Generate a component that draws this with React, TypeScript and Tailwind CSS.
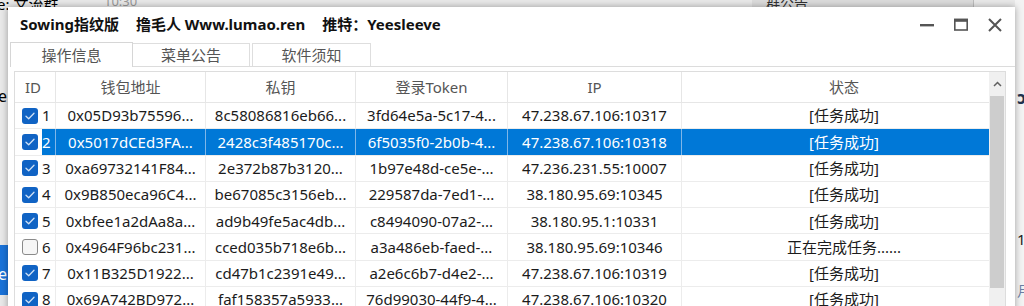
import React from 'react';

type Row = {
    id: number;
    checked: boolean;
    wallet: string;
    key: string;
    token: string;
    ip: string;
    status: string;
};

const rows: Row[] = [
    { id: 1, checked: true, wallet: '0x05D93b75596...', key: '8c58086816eb66...', token: '3fd64e5a-5c17-4...', ip: '47.238.67.106:10317', status: '[任务成功]' },
    { id: 2, checked: true, wallet: '0x5017dCEd3FA...', key: '2428c3f485170c...', token: '6f5035f0-2b0b-4...', ip: '47.238.67.106:10318', status: '[任务成功]' },
    { id: 3, checked: true, wallet: '0xa69732141F84...', key: '2e372b87b3120...', token: '1b97e48d-ce5e-...', ip: '47.236.231.55:10007', status: '[任务成功]' },
    { id: 4, checked: true, wallet: '0x9B850eca96C4...', key: 'be67085c3156eb...', token: '229587da-7ed1-...', ip: '38.180.95.69:10345', status: '[任务成功]' },
    { id: 5, checked: true, wallet: '0xbfee1a2dAa8a...', key: 'ad9b49fe5ac4db...', token: 'c8494090-07a2-...', ip: '38.180.95.1:10331', status: '[任务成功]' },
    { id: 6, checked: false, wallet: '0x4964F96bc231...', key: 'cced035b718e6b...', token: 'a3a486eb-faed-...', ip: '38.180.95.69:10346', status: '正在完成任务......' },
    { id: 7, checked: true, wallet: '0x11B325D1922...', key: 'cd47b1c2391e49...', token: 'a2e6c6b7-d4e2-...', ip: '47.238.67.106:10319', status: '[任务成功]' },
    { id: 8, checked: true, wallet: '0x69A742BD972...', key: 'faf158357a5933...', token: '76d99030-44f9-4...', ip: '47.238.67.106:10320', status: '[任务成功]' },
];

const SELECTED = 2;

const Checkbox: React.FC<{ checked: boolean }> = ({ checked }) =>
    checked ? (
        <span className="flex items-center justify-center w-[16px] h-[16px] rounded-[3px] bg-[#1063c4]">
            <svg width="10" height="8" viewBox="0 0 10 8" fill="none">
                <path d="M1 4.2 L3.7 6.8 L9 1.3" stroke="#cfe0f5" strokeWidth="1.3" strokeLinecap="round" strokeLinejoin="round" />
            </svg>
        </span>
    ) : (
        <span className="block w-[16px] h-[16px] rounded-[3px] bg-[#f6f6f6] border border-[#8a8a8a]" />
    );

const App: React.FC = () => {
    return (
        <div
            className="relative w-[1024px] h-[306px] overflow-hidden bg-[#e9e9e9] text-[#1b1b1b]"
            style={{ fontFamily: '"Noto Sans", "Noto Sans CJK SC", sans-serif' }}
        >
            {/* desktop behind the window */}
            <div className="absolute left-[-3px] top-[-7px] text-[15px] text-black">e: 文流群</div>
            <div className="absolute left-[104px] top-[-8px] text-[13px] text-[#999]">10:30</div>
            <div className="absolute left-[752px] top-0 w-[222px] h-[7px] bg-[#dcdcdc] border-r border-[#bdbdbd]" />
            <div className="absolute left-[766px] top-[-8px] text-[14px] text-[#333]">群公告</div>
            <div className="absolute left-[-2px] top-[84px] text-[16px] text-black">e</div>
            <div className="absolute left-0 top-[245px] w-[8px] h-[50px] bg-[#1a73d9]" />
            <div className="absolute left-[-2px] top-[262px] text-[16px] text-white">e</div>
            <div className="absolute left-[1015px] top-0 w-[9px] h-[306px] bg-[#f3f3f3]" />
            <div className="absolute left-[1017px] top-[84px] text-[18px] font-bold text-[#1f3450]">ɔ</div>
            <div className="absolute left-[1017px] top-[228px] text-[15px] text-[#222]">1</div>
            <div className="absolute left-[1017px] top-[280px] text-[14px] text-[#6b7fa5]">月</div>

            {/* application window */}
            <div className="absolute left-[8px] top-[7px] w-[1007px] h-[320px] bg-white shadow-[0_0_7px_rgba(0,0,0,0.35)]">
                <div className="flex items-center justify-between h-[35px] pl-[12px] pr-[13px]">
                    <div className="flex items-center gap-[17px] text-[15px] font-bold text-[#111]">
                        <span>Sowing指纹版</span>
                        <span>撸毛人 Www.lumao.ren</span>
                        <span>推特：Yeesleeve</span>
                    </div>
                    <div className="flex items-center gap-[20px] text-[#444]">
                        <svg width="14" height="14" viewBox="0 0 14 14">
                            <rect x="0" y="6" width="14" height="2.4" fill="#555" />
                        </svg>
                        <svg width="14" height="14" viewBox="0 0 14 14" fill="none">
                            <rect x="0.8" y="1.5" width="12.4" height="10.5" stroke="#555" strokeWidth="1.6" />
                            <rect x="0" y="0.8" width="14" height="3" fill="#555" />
                        </svg>
                        <svg width="14" height="14" viewBox="0 0 14 14" fill="none">
                            <path d="M1 1 L13 13 M13 1 L1 13" stroke="#555" strokeWidth="2" />
                        </svg>
                    </div>
                </div>

                {/* tabs */}
                <div className="flex items-end h-[25px] ml-[2px] border-b border-[#dcdcdc] text-[15px] text-[#555]">
                    <div className="flex items-center justify-center w-[123px] h-[25px] bg-white border border-b-0 border-[#d6d6d6] relative top-[1px]">
                        操作信息
                    </div>
                    <div className="flex items-center justify-center w-[117px] h-[23px] border border-b-0 border-l-0 border-[#dedede]">
                        菜单公告
                    </div>
                    <div className="flex items-center justify-center w-[119px] h-[23px] ml-[2px] border border-b-0 border-[#dedede]">
                        软件须知
                    </div>
                </div>

                {/* grid */}
                <div className="flex ml-[6px] mt-[4px] w-[992px] border border-[#dddddd] text-[15px]">
                    <div className="w-[974px]">
                        <div className="flex h-[31px] border-b border-[#e6e6e6] text-[#555]">
                            <div className="w-[41px] flex items-center pl-[10px] border-r border-[#e6e6e6]">ID</div>
                            <div className="w-[150px] flex items-center justify-center border-r border-[#e6e6e6]">钱包地址</div>
                            <div className="w-[150px] flex items-center justify-center border-r border-[#e6e6e6]">私钥</div>
                            <div className="w-[152px] flex items-center justify-center border-r border-[#e6e6e6]">登录Token</div>
                            <div className="w-[174px] flex items-center justify-center border-r border-[#e6e6e6]">IP</div>
                            <div className="w-[307px] flex items-center justify-center pl-[17px]">状态</div>
                        </div>
                        {rows.map((r) => {
                            const sel = r.id === SELECTED;
                            const cell = sel
                                ? 'bg-[#0078d7] text-white border-r border-[#7fb6e8]'
                                : 'border-r border-[#ececec]';
                            return (
                                <div key={r.id} className="flex h-[26.3px] border-b border-[#ececec]">
                                    <div className="w-[27px] flex items-center justify-end pr-[4px]">
                                        <Checkbox checked={r.checked} />
                                    </div>
                                    <div className={`w-[14px] flex items-center ${cell}`}>{r.id}</div>
                                    <div className={`w-[150px] flex items-center justify-center ${cell}`}>{r.wallet}</div>
                                    <div className={`w-[150px] flex items-center justify-center ${cell}`}>{r.key}</div>
                                    <div className={`w-[152px] flex items-center justify-center ${cell}`}>{r.token}</div>
                                    <div className={`w-[174px] flex items-center justify-center ${cell}`}>{r.ip}</div>
                                    <div
                                        className={`w-[307px] flex items-center justify-center pl-[17px] ${
                                            sel ? 'bg-[#0078d7] text-white' : ''
                                        }`}
                                    >
                                        {r.status}
                                    </div>
                                </div>
                            );
                        })}
                    </div>
                    {/* vertical scrollbar */}
                    <div className="w-[17px] flex flex-col bg-[#f0f0f0]">
                        <div className="h-[24px] flex items-center justify-center">
                            <svg width="9" height="6" viewBox="0 0 9 6" fill="none">
                                <path d="M1 5 L4.5 1.5 L8 5" stroke="#606060" strokeWidth="1.5" />
                            </svg>
                        </div>
                        <div className="mx-[1px] h-[192px] bg-[#cdcdcd]" />
                        <div className="flex-1" />
                    </div>
                </div>
            </div>
        </div>
    );
};

export default App;
